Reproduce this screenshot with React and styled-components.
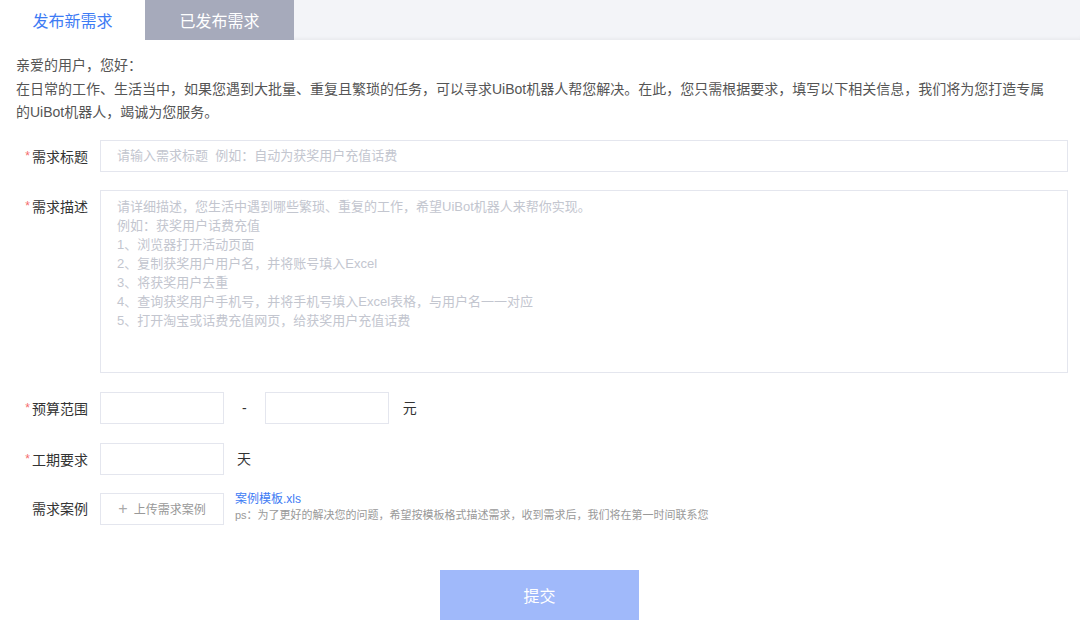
import React from 'react'
import styled, { createGlobalStyle } from 'styled-components'

const GlobalStyle = createGlobalStyle`
  html, body {
    margin: 0;
    padding: 0;
    background: #fff;
    font-family: "Liberation Sans", "Noto Sans CJK SC", sans-serif;
  }
  * { box-sizing: border-box; }
  input::placeholder, textarea::placeholder { color: #c3c6cf; }
`

const Page = styled.div`
  width: 1080px;
  height: 633px;
  overflow: hidden;
`

const TabBar = styled.div`
  display: flex;
  height: 40px;
  background: #f3f4f8;
  box-shadow: inset 0 -4px 4px -3px rgba(0, 0, 0, 0.06);
`

const Tab = styled.div`
  width: ${p => p.w}px;
  display: flex;
  align-items: center;
  justify-content: center;
  font-size: 16px;
  color: ${p => (p.active ? '#3d7bf4' : '#fff')};
  background: ${p => (p.active ? '#fff' : '#a6aabb')};
`

const Content = styled.div`
  padding: 14px 12px 0 16px;
`

const Intro = styled.div`
  font-size: 14px;
  line-height: 23.5px;
  color: #555;
  padding-right: 12px;
  margin-bottom: 15px;
`

const Row = styled.div`
  display: flex;
  align-items: ${p => (p.top ? 'flex-start' : 'center')};
  margin-bottom: ${p => p.mb ?? 19}px;
`

const Label = styled.div`
  width: 72px;
  margin-right: 12px;
  text-align: right;
  font-size: 14px;
  line-height: 32px;
  height: 32px;
  color: #333;
  flex-shrink: 0;
`

const Star = styled.span`
  color: #f56c6c;
  font-size: 12px;
  margin-right: 2px;
  vertical-align: 2px;
`

const Input = styled.input`
  width: ${p => (p.w ? `${p.w}px` : '100%')};
  height: 32px;
  border: 1px solid #e4e6ee;
  border-radius: 0;
  padding: 0 16px;
  font-size: 13px;
  font-family: inherit;
  color: #333;
  outline: none;
  flex-shrink: 0;
  ${p => (p.w ? '' : 'flex: 1;')}
`

const TextArea = styled.textarea`
  flex: 1;
  height: 183px;
  border: 1px solid #e4e6ee;
  border-radius: 0;
  padding: 6px 16px;
  font-size: 13px;
  line-height: 19px;
  font-family: inherit;
  resize: none;
  outline: none;
`

const Unit = styled.span`
  font-size: 14px;
  line-height: 32px;
  color: #333;
  margin: 0 ${p => p.mr ?? 0}px 0 ${p => p.ml}px;
`

const Upload = styled.div`
  width: 124px;
  height: 32px;
  border: 1px solid #e4e6ee;
  display: flex;
  align-items: center;
  justify-content: center;
  gap: 6px;
  font-size: 12px;
  color: #999;
  flex-shrink: 0;
`

const Plus = styled.span`
  font-size: 16px;
  color: #aaa;
  line-height: 1;
`

const CaseInfo = styled.div`
  margin-left: 11px;
  display: flex;
  flex-direction: column;
  align-self: flex-start;
  margin-top: -2px;
`

const Link = styled.a`
  font-size: 12px;
  line-height: 16px;
  color: #3d7bf4;
  text-decoration: none;
`

const Hint = styled.span`
  font-size: 11px;
  line-height: 17px;
  color: #999;
`

const SubmitWrap = styled.div`
  display: flex;
  justify-content: center;
  padding-right: 5px;
  margin-top: 45px;
`

const Submit = styled.button`
  width: 199px;
  height: 50px;
  border: none;
  background: #a0b9fa;
  color: #fff;
  font-size: 16px;
  font-family: inherit;
`

const descPlaceholder = [
  '请详细描述，您生活中遇到哪些繁琐、重复的工作，希望UiBot机器人来帮你实现。',
  '例如：获奖用户话费充值',
  '1、浏览器打开活动页面',
  '2、复制获奖用户用户名，并将账号填入Excel',
  '3、将获奖用户去重',
  '4、查询获奖用户手机号，并将手机号填入Excel表格，与用户名一一对应',
  '5、打开淘宝或话费充值网页，给获奖用户充值话费',
].join('\n')

export default function App() {
  return (
    <Page>
      <GlobalStyle />
      <TabBar>
        <Tab w={145} active>发布新需求</Tab>
        <Tab w={149}>已发布需求</Tab>
      </TabBar>
      <Content>
        <Intro>
          亲爱的用户，您好：
          <br />
          在日常的工作、生活当中，如果您遇到大批量、重复且繁琐的任务，可以寻求UiBot机器人帮您解决。在此，您只需根据要求，填写以下相关信息，我们将为您打造专属的UiBot机器人，竭诚为您服务。
        </Intro>

        <Row mb={18}>
          <Label><Star>*</Star>需求标题</Label>
          <Input placeholder="请输入需求标题  例如：自动为获奖用户充值话费" />
        </Row>

        <Row top>
          <Label><Star>*</Star>需求描述</Label>
          <TextArea placeholder={descPlaceholder} />
        </Row>

        <Row>
          <Label><Star>*</Star>预算范围</Label>
          <Input w={124} />
          <Unit ml={18} mr={18}>-</Unit>
          <Input w={124} />
          <Unit ml={14}>元</Unit>
        </Row>

        <Row mb={18}>
          <Label><Star>*</Star>工期要求</Label>
          <Input w={124} />
          <Unit ml={13}>天</Unit>
        </Row>

        <Row mb={0}>
          <Label>需求案例</Label>
          <Upload><Plus>+</Plus>上传需求案例</Upload>
          <CaseInfo>
            <Link href="#">案例模板.xls</Link>
            <Hint>ps：为了更好的解决您的问题，希望按模板格式描述需求，收到需求后，我们将在第一时间联系您</Hint>
          </CaseInfo>
        </Row>

        <SubmitWrap>
          <Submit>提交</Submit>
        </SubmitWrap>
      </Content>
    </Page>
  )
}
